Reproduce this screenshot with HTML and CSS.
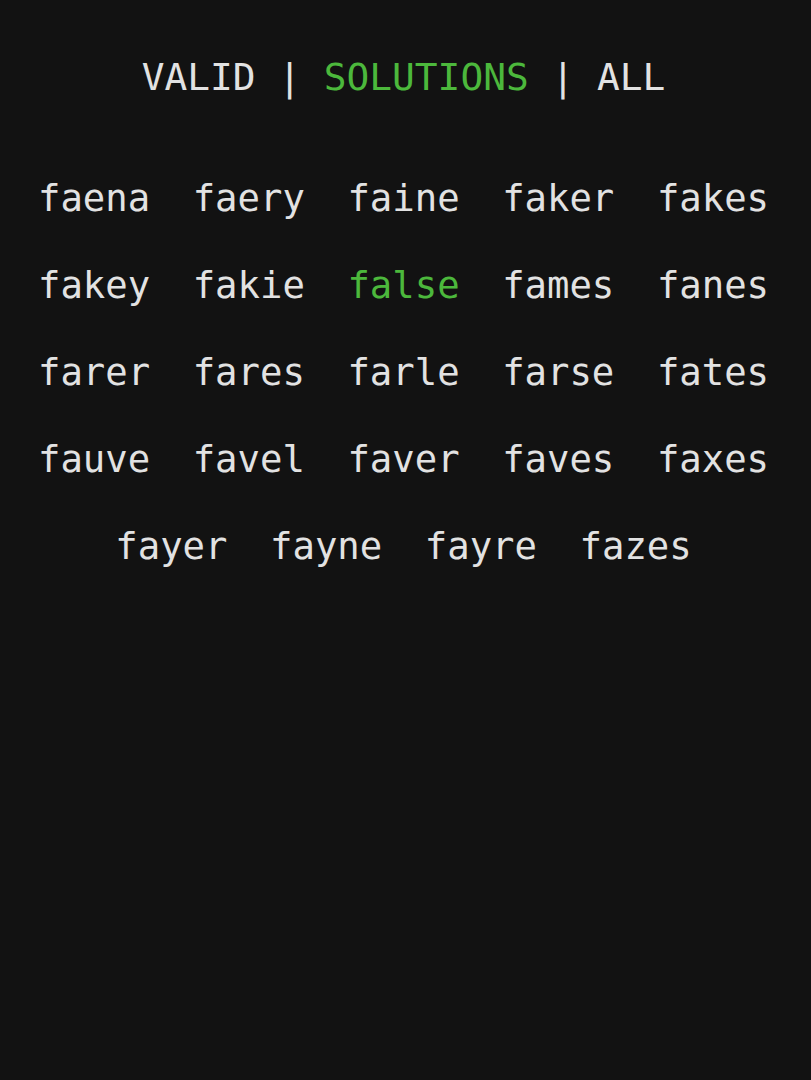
FILE: index.html
```html
<!DOCTYPE html>
<html lang="en">
<head>
<meta charset="utf-8">
<title>Words</title>
<link rel="stylesheet" href="styles.css">
</head>
<body>
<main class="page">
  <nav class="tabs">
    <span class="tab">VALID</span>
    <span class="sep">|</span>
    <span class="tab active">SOLUTIONS</span>
    <span class="sep">|</span>
    <span class="tab">ALL</span>
  </nav>
  <ul class="words">
    <li>faena</li><li>faery</li><li>faine</li><li>faker</li><li>fakes</li>
    <li>fakey</li><li>fakie</li><li class="hit">false</li><li>fames</li><li>fanes</li>
    <li>farer</li><li>fares</li><li>farle</li><li>farse</li><li>fates</li>
    <li>fauve</li><li>favel</li><li>faver</li><li>faves</li><li>faxes</li>
    <li>fayer</li><li>fayne</li><li>fayre</li><li>fazes</li>
  </ul>
</main>
</body>
</html>
```
FILE: styles.css
```css
html, body {
  margin: 0;
  background: #121212;
  height: 100%;
}
body {
  font-family: "DejaVu Sans Mono", "Liberation Mono", monospace;
  color: #e2e2e2;
  font-size: 37.25px;
}
.page {
  padding: 56px 4px 0 0;
  display: flex;
  flex-direction: column;
  align-items: center;
}
.tabs {
  display: flex;
  gap: 22.8px;
  font-size: 37.8px;
  line-height: 43px;
}
.tab.active, .hit {
  color: #4cb83c;
}
.words {
  list-style: none;
  margin: 56px 0 0;
  padding: 0;
  width: 790px;
  display: flex;
  flex-wrap: wrap;
  justify-content: center;
  column-gap: 42.6px;
}
.words li {
  line-height: 87px;
}
```
